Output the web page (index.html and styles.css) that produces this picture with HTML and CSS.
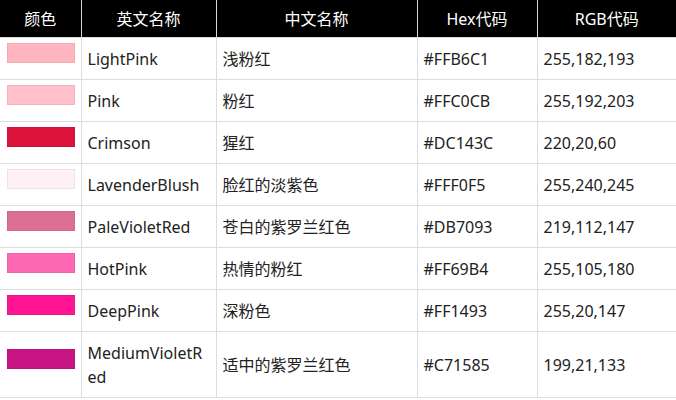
FILE: index.html
```html
<!DOCTYPE html>
<html lang="zh-CN">
<head>
<meta charset="utf-8">
<title>粉色系颜色表</title>
<link rel="stylesheet" href="styles.css">
</head>
<body>
<table class="color-table">
  <colgroup>
    <col class="c-swatch">
    <col class="c-en">
    <col class="c-zh">
    <col class="c-hex">
    <col class="c-rgb">
  </colgroup>
  <thead>
    <tr><th>颜色</th><th>英文名称</th><th>中文名称</th><th>Hex代码</th><th>RGB代码</th></tr>
  </thead>
  <tbody>
    <tr><td class="sw"><div class="swatch" style="background:#FFB6C1"></div></td><td>LightPink</td><td>浅粉红</td><td>#FFB6C1</td><td>255,182,193</td></tr>
    <tr><td class="sw"><div class="swatch" style="background:#FFC0CB"></div></td><td>Pink</td><td>粉红</td><td>#FFC0CB</td><td>255,192,203</td></tr>
    <tr><td class="sw"><div class="swatch" style="background:#DC143C"></div></td><td>Crimson</td><td>猩红</td><td>#DC143C</td><td>220,20,60</td></tr>
    <tr><td class="sw"><div class="swatch" style="background:#FFF0F5"></div></td><td>LavenderBlush</td><td>脸红的淡紫色</td><td>#FFF0F5</td><td>255,240,245</td></tr>
    <tr><td class="sw"><div class="swatch" style="background:#DB7093"></div></td><td>PaleVioletRed</td><td>苍白的紫罗兰红色</td><td>#DB7093</td><td>219,112,147</td></tr>
    <tr><td class="sw"><div class="swatch" style="background:#FF69B4"></div></td><td>HotPink</td><td>热情的粉红</td><td>#FF69B4</td><td>255,105,180</td></tr>
    <tr><td class="sw"><div class="swatch" style="background:#FF1493"></div></td><td>DeepPink</td><td>深粉色</td><td>#FF1493</td><td>255,20,147</td></tr>
    <tr><td class="sw"><div class="swatch" style="background:#C71585"></div></td><td>MediumVioletRed</td><td>适中的紫罗兰红色</td><td>#C71585</td><td>199,21,133</td></tr>
  </tbody>
</table>
</body>
</html>
```
FILE: styles.css
```css
html, body {
  margin: 0;
  padding: 0;
  background: #fff;
}
body {
  font-family: "Noto Sans", "Noto Sans CJK SC", sans-serif;
  font-size: 16px;
  color: #222;
}
.color-table {
  border-collapse: collapse;
  table-layout: fixed;
  width: 676px;
}
.c-swatch { width: 81px; }
.c-en { width: 135px; }
.c-zh { width: 201px; }
.c-hex { width: 120px; }
.c-rgb { width: 139px; }
.color-table th {
  background: #000;
  color: #fff;
  font-weight: normal;
  font-size: 16px;
  height: 37px;
  padding: 0 6px;
  text-align: center;
  border-left: 1px solid #d8d8d8;
  line-height: 24px;
}
.color-table th:first-child { border-left: none; }
.color-table td {
  border: 1px solid #ddd;
  padding: 9px 6px 8px;
  line-height: 24px;
  vertical-align: middle;
  text-align: left;
  word-break: break-all;
}
.color-table td:first-child { border-left: none; }
.color-table td:last-child { border-right: none; }
.color-table td.sw { padding: 5px 6px 5px 7px; }
.swatch {
  width: 68px;
  height: 20px;
  margin-bottom: 11px;
  box-sizing: border-box;
  border: 1px solid rgba(0, 0, 0, 0.06);
}
```
